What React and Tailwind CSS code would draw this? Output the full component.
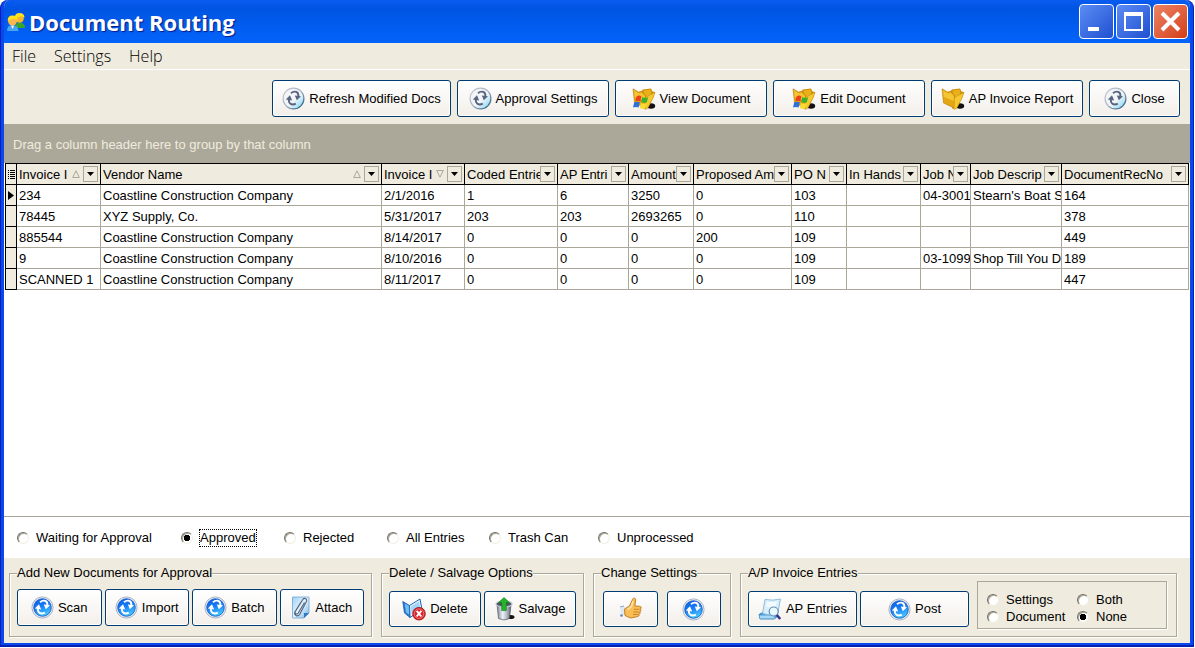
import { useState } from "react";

const columns = [
    { key: "invoice", title: "Invoice I", width: "w-[84px]", sort: "asc" },
    { key: "vendor", title: "Vendor Name", width: "", sort: "asc" },
    { key: "date", title: "Invoice I", width: "w-[83px]", sort: "desc" },
    { key: "coded", title: "Coded Entrie", width: "w-[93px]" },
    { key: "entries", title: "AP Entri", width: "w-[71px]" },
    { key: "amount", title: "Amount", width: "w-[65px]" },
    { key: "proposed", title: "Proposed Am", width: "w-[98px]" },
    { key: "po", title: "PO N", width: "w-[55px]" },
    { key: "hands", title: "In Hands", width: "w-[74px]" },
    { key: "job", title: "Job N", width: "w-[50px]" },
    { key: "jobDesc", title: "Job Descrip", width: "w-[91px]" },
    { key: "rec", title: "DocumentRecNo", width: "w-[127px]" },
];

const rows = [
    { invoice: "234", vendor: "Coastline Construction Company", date: "2/1/2016", coded: "1", entries: "6", amount: "3250", proposed: "0", po: "103", job: "04-3001", jobDesc: "Stearn's Boat S", rec: "164" },
    { invoice: "78445", vendor: "XYZ Supply, Co.", date: "5/31/2017", coded: "203", entries: "203", amount: "2693265", proposed: "0", po: "110", rec: "378" },
    { invoice: "885544", vendor: "Coastline Construction Company", date: "8/14/2017", coded: "0", entries: "0", amount: "0", proposed: "200", po: "109", rec: "449" },
    { invoice: "9", vendor: "Coastline Construction Company", date: "8/10/2016", coded: "0", entries: "0", amount: "0", proposed: "0", po: "109", job: "03-1099", jobDesc: "Shop Till You D", rec: "189" },
    { invoice: "SCANNED 1", vendor: "Coastline Construction Company", date: "8/11/2017", coded: "0", entries: "0", amount: "0", proposed: "0", po: "109", rec: "447" },
];

const filters = [
    { label: "Waiting for Approval", width: "w-[164px]" },
    { label: "Approved", width: "w-[103px]" },
    { label: "Rejected", width: "w-[103px]" },
    { label: "All Entries", width: "w-[102px]" },
    { label: "Trash Can", width: "w-[109px]" },
    { label: "Unprocessed", width: "" },
];

const Arrows = ({ color }) => (
    <g fill="none" stroke={color} strokeWidth="1.9">
        <path d="M9 6.2C12.5 3.2 17 4.8 16.3 9.5" />
        <path d="M13.8 16.6C10 18.8 6.2 16.8 6.9 12" />
        <path d="M12.8 8.4l6.2.8-4.2 4z" fill={color} stroke="none" />
        <path d="M3.8 12.6l4.2-4.4 2.2 5.2z" fill={color} stroke="none" />
    </g>
);

const SilverRefreshIcon = () => (
    <svg width="23" height="23" viewBox="0 0 23 23" aria-hidden="true">
        <defs>
            <linearGradient id="silver" x1="0" y1="0" x2="1" y2="1">
                <stop offset="0" stopColor="#f2f3f5" />
                <stop offset="0.55" stopColor="#f3f6f8" />
                <stop offset="1" stopColor="#6fd2f4" />
            </linearGradient>
            <linearGradient id="silverRim" x1="0" y1="0" x2="1" y2="1">
                <stop offset="0" stopColor="#c9ccd2" />
                <stop offset="0.5" stopColor="#a7b1bf" />
                <stop offset="1" stopColor="#174a72" />
            </linearGradient>
        </defs>
        <circle cx="11.5" cy="11.5" r="10.4" fill="url(#silver)" stroke="url(#silverRim)" strokeWidth="1.2" />
        <Arrows color="#5a6480" />
    </svg>
);

const BlueRefreshIcon = () => (
    <svg width="23" height="23" viewBox="0 0 23 23" aria-hidden="true">
        <defs>
            <linearGradient id="sphere" x1="0" y1="0" x2="0.4" y2="1">
                <stop offset="0" stopColor="#0b5fe0" />
                <stop offset="0.5" stopColor="#1679f5" />
                <stop offset="1" stopColor="#43c3ff" />
            </linearGradient>
        </defs>
        <circle cx="11.5" cy="11.5" r="10.6" fill="#e9f0fa" stroke="#a9b3c4" strokeWidth="1" />
        <circle cx="11.5" cy="11.5" r="8.8" fill="url(#sphere)" stroke="#1450b8" strokeWidth="0.8" />
        <Arrows color="#ffffff" />
    </svg>
);

const FolderShape = () => (
    <>
        <ellipse cx="19" cy="18" rx="4.2" ry="2.8" fill="#111" />
        <path d="M8 5l3-3.5 8-1 1.5 3 2.5.5-1.5 5-5 10-5 2z" fill="#c98d05" />
        <path d="M11.5 2.5l7-1 1 2.5-3 9-4 5z" fill="#eab01c" />
        <path d="M1 .8l5.5 3.2 3-.8 4 3.8.5 13.5L2.5 15z" fill="#e3a615" stroke="#b97f08" strokeWidth="0.6" />
        <path d="M2 2.5l5 3 2.8-.5 3 3v5L2.8 9z" fill="#f4c534" />
        <path d="M13.5 9.5l9.5-5.2-2 5.7-5.5 10.5-2.5 1z" fill="#f7c72f" stroke="#c58c0c" strokeWidth="0.5" />
    </>
);

const FolderIcon = () => (
    <svg width="24" height="22" viewBox="0 0 24 22" aria-hidden="true">
        <FolderShape />
    </svg>
);

const WindowsFolderIcon = () => (
    <svg width="24" height="22" viewBox="0 0 24 22" aria-hidden="true">
        <FolderShape />
        <path d="M4.5 8.5q2.5-1.7 4.8-.2l-1 5.2q-2.5-1.3-5 0z" fill="#ee3d1c" />
        <path d="M10.2 9q2.5 1.6 6 .2l-1.4 5q-3 1.3-5.6-.2z" fill="#3bb02e" />
        <path d="M2.2 14.4q2.6-1.4 5.6-.1l-1.2 5.2q-3-1.2-5.6 0z" fill="#2d6fe0" />
        <path d="M8.9 15q2.6 1.4 5.6.3L13 20.4q-2.9 1-5.3-.4z" fill="#fbdc30" />
    </svg>
);

const AttachIcon = () => (
    <svg width="20" height="23" viewBox="0 0 20 23" aria-hidden="true">
        <defs>
            <linearGradient id="sheet" x1="0" y1="0" x2="1" y2="1">
                <stop offset="0" stopColor="#9fd0f3" />
                <stop offset="0.5" stopColor="#e4f4fe" />
                <stop offset="1" stopColor="#6fb1e6" />
            </linearGradient>
        </defs>
        <path d="M1.5 1H18v16l-5 5H1.5z" fill="url(#sheet)" stroke="#6ba4d6" strokeWidth="0.8" />
        <path d="M18 17h-5v5z" fill="#2f78c4" />
        <path d="M13.5 6.5L7.2 17c-1.3 2-4 .5-2.9-1.5l7.5-12c1.6-2.4 5-.4 3.6 2L8.6 18.5c-1.9 2.8-6.2.6-4.6-2.7l6-9.8" fill="none" stroke="#53637b" strokeWidth="1.1" />
    </svg>
);

const DeleteIcon = () => (
    <svg width="24" height="23" viewBox="0 0 24 23" aria-hidden="true">
        <path d="M.8 3.5l6.7 4 .5 12L2.5 15z" fill="#2a7fd6" stroke="#1655a2" strokeWidth="0.8" />
        <path d="M2.8 5.5l4 2.3.4 9-3.2-2.5z" fill="#71bdf5" />
        <path d="M7.5 7.5L18 1l2 10.5-12 8z" fill="#e4f3fe" stroke="#1b66b5" strokeWidth="1" />
        <path d="M9 8.500l8-5 1.200 7-8.700 5z" fill="#9fd3f8" />
        <circle cx="17" cy="15.7" r="6.3" fill="#dc2327" stroke="#951015" strokeWidth="0.8" />
        <circle cx="17" cy="15.7" r="4.8" fill="none" stroke="#f59492" strokeWidth="0.7" />
        <path d="M14.7 12.9l4.6 5.6M19.3 12.9l-4.6 5.6" stroke="#fff" strokeWidth="1.9" />
    </svg>
);

const SalvageIcon = () => (
    <svg width="20" height="24" viewBox="0 0 20 24" aria-hidden="true">
        <defs>
            <linearGradient id="can">
                <stop offset="0" stopColor="#7d8693" />
                <stop offset="0.4" stopColor="#eef1f5" />
                <stop offset="0.7" stopColor="#b4bbc5" />
                <stop offset="1" stopColor="#5b626e" />
            </linearGradient>
        </defs>
        <ellipse cx="15.5" cy="20" rx="4" ry="2" fill="#111" />
        <path d="M2 7.5l1.5 14q5.5 3 11 0l1.5-14z" fill="url(#can)" stroke="#3f4550" strokeWidth="0.6" />
        <ellipse cx="9" cy="7" rx="8" ry="2.8" fill="#4a5260" stroke="#c0c6cf" strokeWidth="1.2" />
        <path d="M9 .5l5.5 5h-3.2v8H6.700v-8H3.5z" fill="#25b52b" stroke="#0f7a18" strokeWidth="0.6" />
    </svg>
);

const ThumbIcon = () => (
    <svg width="24" height="24" viewBox="0 0 24 24" aria-hidden="true">
        <path d="M2 11l4-1.5 2 1.5v7l-5-.5z" fill="#dfe8f2" />
        <circle cx="3.5" cy="18.5" r="1.3" fill="#5f87b8" />
        <path d="M2 10l4-1" stroke="#8fa8c4" strokeWidth="1.2" />
        <path d="M6.5 12l5-3 3-6.5c.4-2 3.2-1.8 3.2.5L16.8 9l5 .3c1.9.3 1.9 2.4.3 2.8 1.3.7 1 2.5-.5 2.7 1 .9.6 2.3-.8 2.5.7 1.1 0 2.2-1.2 2.3l-7 1.4L7 18.500z" fill="#f8bd55" stroke="#bd741b" strokeWidth="0.9" />
        <path d="M15 4l-1.5 5.5-4 3" stroke="#ffe4a3" strokeWidth="1.6" fill="none" />
        <path d="M16 12.3h5.5M15.5 15H21M15 17.500h5" stroke="#c97f22" strokeWidth="0.9" />
    </svg>
);

const EntriesIcon = () => (
    <svg width="24" height="23" viewBox="0 0 24 23" aria-hidden="true">
        <path d="M1 16.5L5.5 14h11l3 4-3 3H2z" fill="#4b9bd8" stroke="#2871ae" strokeWidth="0.8" />
        <path d="M1.5 17.5h14l1.5 3H2z" fill="#a7d8f4" />
        <path d="M7 1.5q8 1.5 15.5-.5l-3 15.5q-7.500 1.500-15-1z" fill="#d8effc" stroke="#82b6da" strokeWidth="0.9" />
        <path d="M9 3.5q5 1 10 0l-1.500 5q-5 1-9.500 0z" fill="#f3fbff" />
        <circle cx="15.7" cy="13.5" r="4.5" fill="#eef9ff" fillOpacity="0.8" stroke="#668dad" strokeWidth="1.2" />
        <path d="M18.8 17l3.4 4" stroke="#35308c" strokeWidth="2.5" />
    </svg>
);

const UsersIcon = () => (
    <svg width="20" height="20" viewBox="0 0 20 20" aria-hidden="true">
        <path d="M9 16q0-5 4.5-5.5Q19 10.5 19 16z" fill="#35a62b" />
        <circle cx="13.5" cy="6.5" r="4.3" fill="#f7b52a" />
        <path d="M9 6q-.5-5 4.5-5t5 5q-2.5-2.5-4.500-1.500T9 6z" fill="#ffe21f" />
        <path d="M1 19q0-6 5.5-6t6 6z" fill="#48a4f0" />
        <path d="M5 13.5h3L6.700 17z" fill="#fff" />
        <circle cx="6.5" cy="9" r="4.5" fill="#f8b84d" />
        <path d="M1.8 9q-.5-5.500 4.800-5.500t5 5.500q-2.500-3-5-2T1.800 9z" fill="#ffe11c" />
    </svg>
);

const XpButton = ({ icon, label, children, className }) => (
    <button
        type="button"
        aria-label={label}
        className={`flex items-center justify-center gap-1 rounded-[3px] border border-[#003c74] bg-linear-to-b from-white to-[#f3efea] whitespace-nowrap shadow-[inset_0_0_0_1px_#ffffff] ${className}`}
    >
        {icon}
        {children}
    </button>
);

const Radio = ({ name, label, checked, onChange, focused, className = "" }) => (
    <label className={`flex items-center gap-[6px] ${className}`}>
        <input
            type="radio"
            name={name}
            checked={checked}
            onChange={onChange}
            className="size-3 shrink-0 appearance-none rounded-full border border-t-[#716f64] border-r-[#f1efe2] border-b-[#f1efe2] border-l-[#716f64] bg-white shadow-[inset_1px_1px_0_#aca899] outline-none checked:bg-[radial-gradient(circle,#000_3px,#fff_3px)]"
        />
        <span className={focused ? "border border-dotted border-black leading-4" : "border border-transparent leading-4"}>
            {label}
        </span>
    </label>
);

const Group = ({ title, children, className }) => (
    <fieldset className={`min-w-0 border border-[#aca899] shadow-[1px_1px_0_#fff,inset_1px_1px_0_#fff] ${className}`}>
        <legend className="bg-[#efebde] leading-4">{title}</legend>
        {children}
    </fieldset>
);

const SortMark = ({ direction }) => (
    <svg width="8" height="8" viewBox="0 0 8 8" className="mr-[3px] ml-[3px] shrink-0" aria-hidden="true">
        <path
            d={direction === "asc" ? "M4 .8L7.3 7.5H.7z" : "M4 7.2L.7.5h6.6z"}
            fill="none"
            stroke="#aca899"
        />
    </svg>
);

const HeaderCell = ({ column }) => (
    <th className="border-t border-r border-b border-black bg-[#efebde] p-0 font-normal">
        <div className="flex h-5 items-center pr-[2px] pl-[2px]">
            <span className="min-w-0 flex-1 overflow-hidden pt-[2px] text-left leading-[18px] whitespace-nowrap">
                {column.title}
            </span>
            {column.sort && <SortMark direction={column.sort} />}
            <button
                type="button"
                aria-label={`Filter ${column.title}`}
                className="flex h-4 w-[15px] shrink-0 items-center justify-center border border-[#aca899]"
            >
                <svg width="7" height="4" viewBox="0 0 7 4" aria-hidden="true">
                    <path d="M0 0h7L3.5 4z" />
                </svg>
            </button>
        </div>
    </th>
);

export default function App() {
    const [filter, setFilter] = useState("Approved");
    const [mode, setMode] = useState("None");

    return (
        <div className="min-h-screen bg-white pr-px pb-px font-['Liberation_Sans',Arial,sans-serif] text-[13px] text-black">
            <div className="flex min-h-[calc(100vh-1px)] flex-col rounded-t-lg border-x border-b-2 border-[#0a1fb0] bg-[#0a1fb0]">
                <div className="flex flex-1 flex-col overflow-hidden rounded-t-lg border-x-[3px] border-b-2 border-[#0848ee] bg-[#efebde]">
                    <header className="flex h-[43px] items-center justify-between bg-linear-to-b from-[#0a5cf0] from-0% via-[#0054e3] via-20% to-[#0364fb] px-[2px]">
                        <div className="flex items-center gap-[3px]">
                            <UsersIcon />
                            <h1 className="font-['Open_Sans','Noto_Sans',sans-serif] text-[22px] leading-8 font-bold whitespace-nowrap text-white [text-shadow:1px_1px_1px_#0a1883]">
                                Document Routing
                            </h1>
                        </div>
                        <div className="flex gap-[2px]">
                            <button type="button" aria-label="Minimize" className="size-[35px] rounded border border-white bg-linear-to-br from-[#5d8cf5] to-[#1f4fd0]">
                                <svg viewBox="0 0 33 33" aria-hidden="true">
                                    <path d="M8 22h11v4H8z" fill="#fff" />
                                </svg>
                            </button>
                            <button type="button" aria-label="Maximize" className="size-[35px] rounded border border-white bg-linear-to-br from-[#5d8cf5] to-[#1f4fd0]">
                                <svg viewBox="0 0 33 33" aria-hidden="true">
                                    <path d="M7 7h19v19H7zM9 11v13h15V11z" fill="#fff" fillRule="evenodd" />
                                </svg>
                            </button>
                            <button type="button" aria-label="Close window" className="size-[35px] rounded border border-white bg-linear-to-br from-[#ec8263] to-[#d43c10]">
                                <svg viewBox="0 0 33 33" aria-hidden="true">
                                    <path d="M8 8l17 17M25 8L8 25" stroke="#fff" strokeWidth="4" />
                                </svg>
                            </button>
                        </div>
                    </header>

                    <nav className="flex h-[27px] items-center gap-[18px] border-b border-white pl-2 font-['Open_Sans','Noto_Sans',sans-serif] text-[16px] font-light">
                        <button type="button">File</button>
                        <button type="button">Settings</button>
                        <button type="button">Help</button>
                    </nav>

                    <div className="flex justify-end gap-[6px] pt-[10px] pr-[10px] pb-[7px]">
                        <XpButton className="h-[37px] w-[179px]" icon={<SilverRefreshIcon />}>Refresh Modified Docs</XpButton>
                        <XpButton className="h-[37px] w-[152px]" icon={<SilverRefreshIcon />}>Approval Settings</XpButton>
                        <XpButton className="h-[37px] w-[152px]" icon={<WindowsFolderIcon />}>View Document</XpButton>
                        <XpButton className="h-[37px] w-[152px]" icon={<WindowsFolderIcon />}>Edit Document</XpButton>
                        <XpButton className="h-[37px] w-[152px]" icon={<FolderIcon />}>AP Invoice Report</XpButton>
                        <XpButton className="h-[37px] w-[91px]" icon={<SilverRefreshIcon />}>Close</XpButton>
                    </div>

                    <div className="flex h-[39px] items-center bg-[#aca899] pt-[2px] pl-[9px] text-[#efebde]">
                        Drag a column header here to group by that column
                    </div>

                    <main className="flex-1 border-b border-[#aca899] bg-white px-px">
                        <table className="w-full table-fixed border-separate border-spacing-0">
                            <colgroup>
                                <col className="w-3" />
                                {columns.map((column) => (
                                    <col key={column.key} className={column.width} />
                                ))}
                            </colgroup>
                            <thead>
                                <tr>
                                    <th aria-label="Row marker" className="border border-black bg-[#efebde] p-0">
                                        <svg width="7" height="9" viewBox="0 0 7 9" className="mx-auto" aria-hidden="true">
                                            <path d="M0 .5h1M2 .5h5M0 2.5h1M2 2.5h5M0 4.5h1M2 4.5h5M0 6.5h1M2 6.5h5M0 8.5h1M2 8.5h5" stroke="#000" />
                                        </svg>
                                    </th>
                                    {columns.map((column) => (
                                        <HeaderCell key={column.key} column={column} />
                                    ))}
                                </tr>
                            </thead>
                            <tbody>
                                {rows.map((row, index) => (
                                    <tr key={row.rec}>
                                        <td className="border-x border-b border-black bg-[#efebde] p-0">
                                            {index === 0 && (
                                                <svg width="6" height="9" viewBox="0 0 6 9" className="mx-auto" aria-hidden="true">
                                                    <path d="M0 0l6 4.5L0 9z" />
                                                </svg>
                                            )}
                                        </td>
                                        {columns.map((column) => (
                                            <td
                                                key={column.key}
                                                className="h-[21px] border-r border-b border-[#aca899] py-0 pr-0 pl-[2px]"
                                            >
                                                <div className="overflow-hidden pt-[2px] leading-[18px] whitespace-nowrap">
                                                    {row[column.key]}
                                                </div>
                                            </td>
                                        ))}
                                    </tr>
                                ))}
                            </tbody>
                        </table>
                    </main>

                    <div className="flex h-[41px] items-center bg-white pl-[13px]">
                        {filters.map(({ label, width }) => (
                            <Radio
                                key={label}
                                name="filter"
                                label={label}
                                checked={filter === label}
                                focused={filter === label}
                                onChange={() => setFilter(label)}
                                className={width}
                            />
                        ))}
                    </div>

                    <footer className="flex gap-[9px] pt-[7px] pr-[13px] pb-[6px] pl-[5px]">
                        <Group title="Add New Documents for Approval" className="w-[363px] px-[7px]">
                            <div className="flex gap-[3px] pt-2 pb-[10px]">
                                <XpButton className="h-[37px] flex-1" icon={<BlueRefreshIcon />}>Scan</XpButton>
                                <XpButton className="h-[37px] flex-1" icon={<BlueRefreshIcon />}>Import</XpButton>
                                <XpButton className="h-[37px] flex-1" icon={<BlueRefreshIcon />}>Batch</XpButton>
                                <XpButton className="h-[37px] flex-1" icon={<AttachIcon />}>Attach</XpButton>
                            </div>
                        </Group>
                        <Group title="Delete / Salvage Options" className="w-[203px] px-[7px]">
                            <div className="flex gap-[3px] pt-[10px] pb-[9px]">
                                <XpButton className="h-9 flex-1" icon={<DeleteIcon />}>Delete</XpButton>
                                <XpButton className="h-9 flex-1" icon={<SalvageIcon />}>Salvage</XpButton>
                            </div>
                        </Group>
                        <Group title="Change Settings" className="w-[138px] px-[7px]">
                            <div className="flex gap-[9px] px-[2px] pt-[10px] pb-[9px]">
                                <XpButton className="h-9 flex-1" icon={<ThumbIcon />} label="Approve" />
                                <XpButton className="h-9 flex-1" icon={<BlueRefreshIcon />} label="Refresh settings" />
                            </div>
                        </Group>
                        <Group title="A/P Invoice Entries" className="flex-1 px-[7px]">
                            <div className="flex gap-[3px] pr-[2px]">
                                <XpButton className="mt-[10px] h-9 w-[109px]" icon={<EntriesIcon />}>AP Entries</XpButton>
                                <XpButton className="mt-[10px] h-9 w-[109px]" icon={<BlueRefreshIcon />}>Post</XpButton>
                                <div className="ml-[5px] grid h-12 flex-1 grid-cols-[90px_1fr] content-center border border-[#aca899] pt-[6px] pl-[9px] shadow-[1px_1px_0_#fff]">
                                    {["Settings", "Both", "Document", "None"].map((label) => (
                                        <Radio
                                            key={label}
                                            name="mode"
                                            label={label}
                                            checked={mode === label}
                                            onChange={() => setMode(label)}
                                            className="h-[17px]"
                                        />
                                    ))}
                                </div>
                            </div>
                        </Group>
                    </footer>
                </div>
            </div>
        </div>
    );
}
